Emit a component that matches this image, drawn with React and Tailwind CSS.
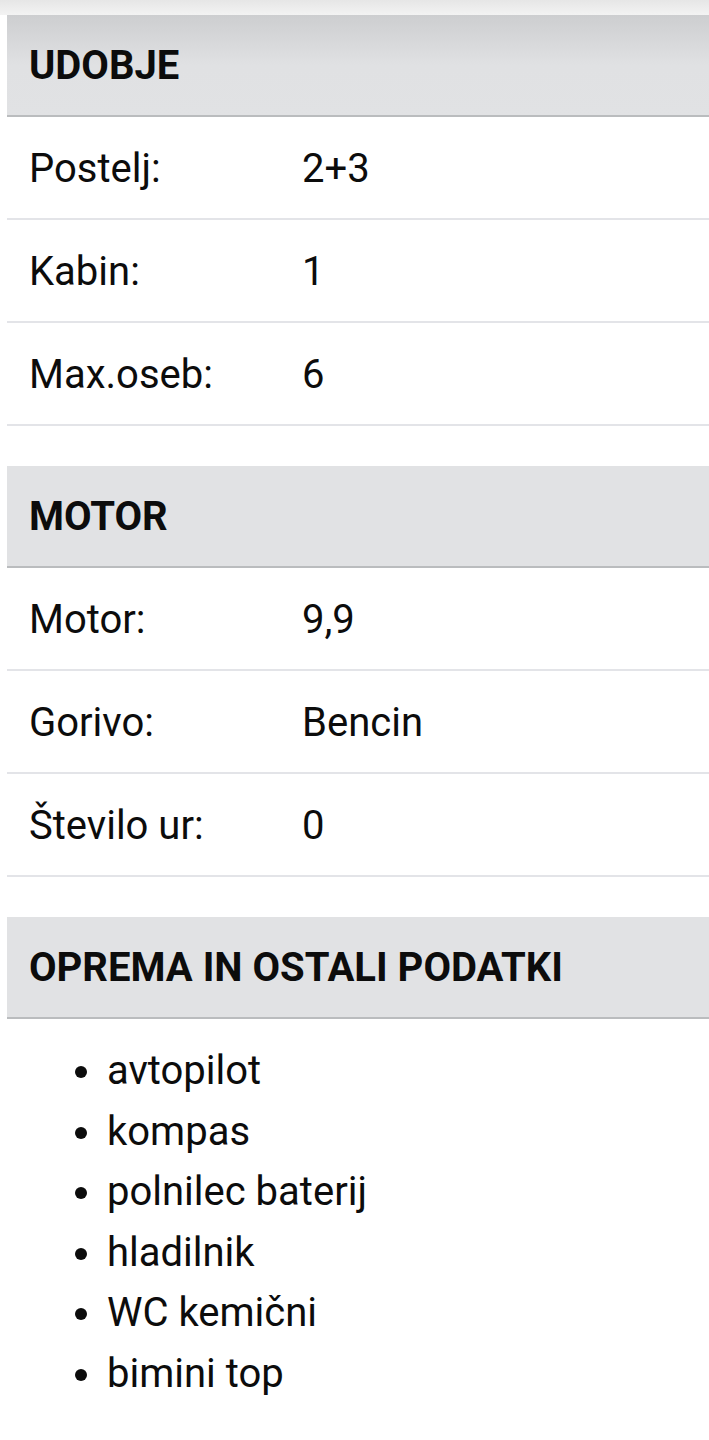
import React from 'react';

const sections = [
  {
    title: 'UDOBJE',
    rows: [
      ['Postelj:', '2+3'],
      ['Kabin:', '1'],
      ['Max.oseb:', '6'],
    ],
  },
  {
    title: 'MOTOR',
    rows: [
      ['Motor:', '9,9'],
      ['Gorivo:', 'Bencin'],
      ['Število ur:', '0'],
    ],
  },
];

const equipment = ['avtopilot', 'kompas', 'polnilec baterij', 'hladilnik', 'WC kemični', 'bimini top'];

const Header = ({ title, first }) => (
  <div
    className={`h-[102px] flex items-center pl-[22px] bg-[#e1e2e4] border-b-2 border-[#babcbe] ${
      first ? 'bg-gradient-to-b from-[#cdced0] via-[#e0e1e3] to-[#e1e2e4]' : ''
    }`}
  >
    <h2 className="text-[40px] leading-none font-bold text-[#0c0c0c] pt-[1px]">{title}</h2>
  </div>
);

const App = () => {
  return (
    <div className="w-[709px] min-h-[1440px] bg-white text-[#0c0c0c] font-['Roboto',sans-serif]">
      <div className="h-[15px] bg-gradient-to-b from-[#e6e6e6] to-[#f3f3f3]" />
      <div className="pl-[7px]">
        {sections.map((s, i) => (
          <section key={s.title} className={i > 0 ? 'mt-[40px]' : ''}>
            <Header title={s.title} first={i === 0} />
            {s.rows.map(([label, value]) => (
              <div
                key={label}
                className="h-[103px] flex items-center border-b-2 border-[#e3e4e8] text-[40px] leading-none pt-[2px]"
              >
                <span className="w-[295px] pl-[22px]">{label}</span>
                <span>{value}</span>
              </div>
            ))}
          </section>
        ))}
        <section className="mt-[40px]">
          <Header title="OPREMA IN OSTALI PODATKI" />
          <ul className="list-disc pl-[99px] pt-[22px] text-[40px] leading-[60.5px]">
            {equipment.map((e) => (
              <li key={e} className="pl-[1px]">{e}</li>
            ))}
          </ul>
        </section>
      </div>
    </div>
  );
};

export default App;
